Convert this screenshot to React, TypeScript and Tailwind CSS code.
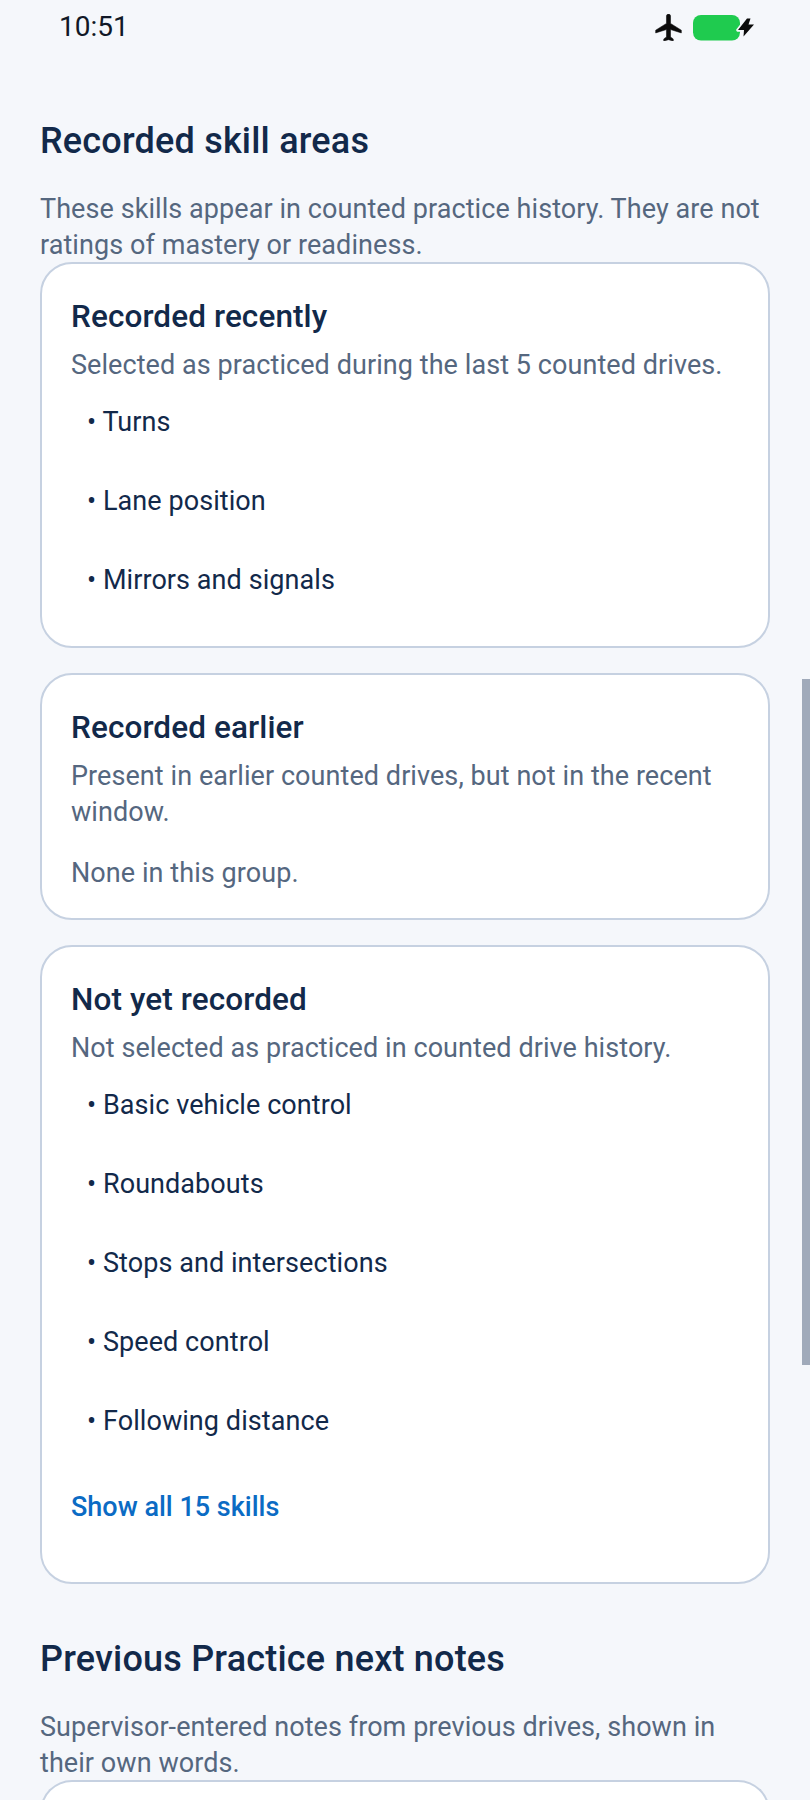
const FONT = "font-['Roboto',sans-serif]"

const BOLT = 'M54 3.5 45 15h6l-.5 6.5L61 9.5h-5.5l2-6z'

function StatusBar() {
  return (
    <div className="flex h-[54px] items-center justify-between pl-[59px] pr-[55px]">
      <span className="text-[28px] leading-none text-[#111827]">10:51</span>
      <div className="flex items-center">
        <svg width="27" height="27" viewBox="2 2 19 20" className="mr-[11px] mt-px">
          <path fill="#0b0b0b" stroke="#0b0b0b" strokeWidth="0.4" strokeLinejoin="round" d="M21 16v-2l-8-5V3.5c0-.83-.67-1.5-1.5-1.5S10 2.67 10 3.5V9l-8 5v2l8-2.5V19l-2 1.5V22l3.5-1 3.5 1v-1.5L13 19v-5.5z" />
        </svg>
        <svg width="62" height="26" viewBox="0 0 62 26" className="mt-px">
          <rect x="0" y="0" width="47" height="25.5" rx="8" fill="#1fcb4f" />
          <path d={BOLT} fill="#f5f7fb" stroke="#f5f7fb" strokeWidth="3.5" strokeLinejoin="round" />
          <path d={BOLT} fill="#0b0b0b" />
        </svg>
      </div>
    </div>
  )
}

function Section({ title, sub }: { title: string; sub: string }) {
  return (
    <div className="-mb-px">
      <h2 className="mb-[28px] text-[36px] font-medium leading-[44px] tracking-[0.2px] text-[#12294a]">{title}</h2>
      <p className="text-[27px] leading-[36px] tracking-[0.07px] text-[#55677f]">{sub}</p>
    </div>
  )
}

function SkillList({ items }: { items: string[] }) {
  return (
    <ul>
      {items.map(s => (
        <li key={s} className="flex h-[79px] items-center pl-[16px] text-[27px] tracking-[0.07px] text-[#12294a]">• {s}</li>
      ))}
    </ul>
  )
}

function Card({ title, desc, children, className }: { title: string; desc: string; children: React.ReactNode; className?: string }) {
  return (
    <div className={`rounded-[32px] border-2 border-[#c6d1e1] bg-white px-[29px] pt-[33px] ${className ?? ''}`}>
      <h3 className="mb-[10px] text-[31.5px] font-medium leading-[40px] tracking-[0.1px] text-[#12294a]">{title}</h3>
      <p className="text-[27px] leading-[36px] tracking-[0.07px] text-[#55677f]">{desc}</p>
      {children}
    </div>
  )
}

export default function App() {
  return (
    <div className={`relative h-[1800px] overflow-hidden bg-[#f5f7fb] ${FONT}`}>
      <StatusBar />
      <div className="pl-[40px] pr-[40px] pt-[65px]">
        <Section title="Recorded skill areas" sub="These skills appear in counted practice history. They are not ratings of mastery or readiness." />
        <div className="flex flex-col gap-[25px]">
          <Card title="Recorded recently" desc="Selected as practiced during the last 5 counted drives." className="pb-[26px]">
            <SkillList items={['Turns', 'Lane position', 'Mirrors and signals']} />
          </Card>
          <Card title="Recorded earlier" desc="Present in earlier counted drives, but not in the recent window." className="pb-[27px]">
            <p className="mt-[25px] text-[27px] leading-[36px] tracking-[0.07px] text-[#55677f]">None in this group.</p>
          </Card>
          <Card title="Not yet recorded" desc="Not selected as practiced in counted drive history." className="pb-[57px]">
            <SkillList items={['Basic vehicle control', 'Roundabouts', 'Stops and intersections', 'Speed control', 'Following distance']} />
            <button className="mt-[28px] block text-[27px] font-medium leading-[36px] text-[#0b6bc4]">Show all 15 skills</button>
          </Card>
        </div>
        <div className="mt-[53px]">
          <Section title="Previous Practice next notes" sub="Supervisor-entered notes from previous drives, shown in their own words." />
          <div className="h-[60px] rounded-t-[32px] border-2 border-b-0 border-[#c6d1e1] bg-white" />
        </div>
      </div>
      <div className="absolute right-0 top-[679px] h-[686px] w-[8px] bg-[#a0aaba]" />
    </div>
  )
}
